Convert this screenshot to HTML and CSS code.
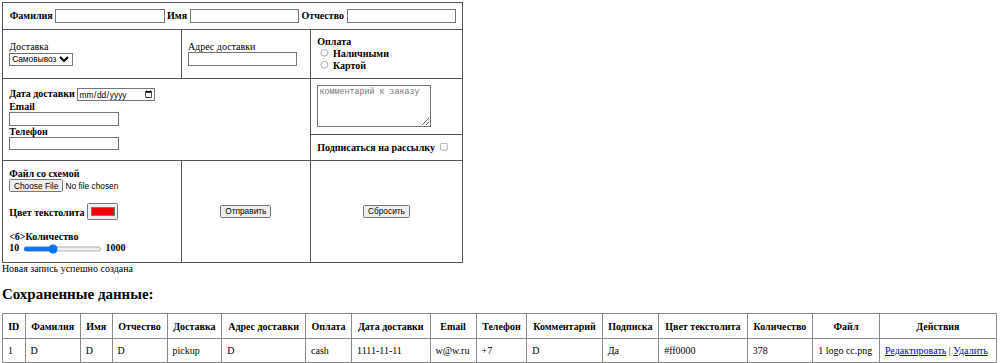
FILE: index.html
```html
<!DOCTYPE html>
<html lang="ru">
<head>
  <meta charset="UTF-8">
  <meta name="viewport" content="width=device-width, initial-scale=1.0">
  <title>Заказ</title>
  <link rel="stylesheet" href="styles.css">
</head>
<body>
  <form class="order-form">
    <table class="form-table">
      <colgroup>
        <col class="col-a">
        <col class="col-b">
        <col class="col-c">
      </colgroup>
      <tr class="row-names">
        <td colspan="3">
          <b>Фамилия</b> <input type="text" class="text-input"> <b>Имя</b> <input type="text" class="text-input"> <b>Отчество</b> <input type="text" class="text-input">
        </td>
      </tr>
      <tr class="row-delivery">
        <td>Доставка<br><select class="delivery"><option>Самовывоз</option><option>Курьер</option></select></td>
        <td>Адрес доставки<br><input type="text" class="text-input"></td>
        <td>
          <b>Оплата</b><br>
          <input type="radio" name="pay"> <b>Наличными</b><br>
          <input type="radio" name="pay"> <b>Картой</b>
        </td>
      </tr>
      <tr class="row-comment">
        <td colspan="2" rowspan="2">
          <b>Дата доставки</b> <input type="date" class="date-input"><br>
          <b>Email</b><br>
          <input type="email" class="text-input"><br>
          <b>Телефон</b><br>
          <input type="tel" class="text-input">
        </td>
        <td><textarea class="comment" placeholder="комментарий к заказу"></textarea></td>
      </tr>
      <tr class="row-subscribe">
        <td><b>Подписаться на рассылку</b> <input type="checkbox"></td>
      </tr>
      <tr class="row-submit">
        <td>
          <b>Файл со схемой</b><br>
          <input type="file" class="file-input"><br><br>
          <b>Цвет текстолита</b> <input type="color" value="#ff0000"><br><br>
          <b>&lt;б&gt;Количество</b><br>
          <b>10</b> <input type="range" min="10" max="1000" value="378" class="amount"> <b>1000</b>
        </td>
        <td class="center"><button type="submit">Отправить</button></td>
        <td class="center"><button type="reset">Сбросить</button></td>
      </tr>
    </table>
  </form>

  <div class="status">Новая запись успешно создана</div>

  <h2>Сохраненные данные:</h2>
  <table class="data-table">
    <tr>
      <th>ID</th>
      <th>Фамилия</th>
      <th>Имя</th>
      <th>Отчество</th>
      <th>Доставка</th>
      <th>Адрес доставки</th>
      <th>Оплата</th>
      <th>Дата доставки</th>
      <th>Email</th>
      <th>Телефон</th>
      <th>Комментарий</th>
      <th>Подписка</th>
      <th>Цвет текстолита</th>
      <th>Количество</th>
      <th>Файл</th>
      <th>Действия</th>
    </tr>
    <tr>
      <td>1</td>
      <td>D</td>
      <td>D</td>
      <td>D</td>
      <td>pickup</td>
      <td>D</td>
      <td>cash</td>
      <td>1111-11-11</td>
      <td>w@w.ru</td>
      <td>+7</td>
      <td>D</td>
      <td>Да</td>
      <td>#ff0000</td>
      <td>378</td>
      <td>1 logo cc.png</td>
      <td><a href="#">Редактировать</a> | <a href="#">Удалить</a></td>
    </tr>
  </table>
</body>
</html>
```

FILE: styles.css
```css
html {
  zoom: 0.625;
}
body {
  margin: 3px 5px 3px 3px;
  font-family: "Liberation Serif", "Times New Roman", serif;
  font-size: 16px;
  color: #000;
  background-color: #fff;
}
input, select, button, textarea {
  font-family: "Liberation Sans", Arial, sans-serif;
  font-size: 13.33px;
}
.form-table {
  width: 736px;
  border-collapse: collapse;
  table-layout: fixed;
}
.form-table td {
  border: 1px solid #555;
  padding: 0 10px;
  vertical-align: middle;
}
.col-a {
  width: 286px;
}
.col-b {
  width: 207px;
}
.col-c {
  width: 243px;
}
.row-names {
  height: 43px;
}
.row-names td {
  padding: 0 6px 0 11px;
  white-space: nowrap;
}
.row-delivery {
  height: 78px;
}
.row-comment {
  height: 90px;
}
.row-subscribe {
  height: 42px;
}
.row-submit {
  height: 163px;
}
.text-input {
  box-sizing: border-box;
  width: 175px;
  height: 22px;
}
.delivery {
  height: 21px;
  margin-top: 1px;
}
.date-input {
  box-sizing: border-box;
  width: 124px;
  height: 20px;
}
.comment {
  box-sizing: border-box;
  width: 182px;
  height: 67px;
  font-family: "Liberation Mono", "Courier New", monospace;
  font-size: 13.33px;
  vertical-align: middle;
}
.amount {
  width: 126px;
  vertical-align: middle;
}
.center {
  text-align: center;
}
.status {
  margin: 0;
}
h2 {
  font-size: 24px;
  margin: 19px 0 17px;
}
.data-table {
  width: 100%;
  border-collapse: collapse;
}
.data-table th, .data-table td {
  border: 1px solid #8a8a8a;
  padding: 10px 8px;
}
.data-table td {
  text-align: left;
}
.data-table a {
  color: #0000ee;
}
```
